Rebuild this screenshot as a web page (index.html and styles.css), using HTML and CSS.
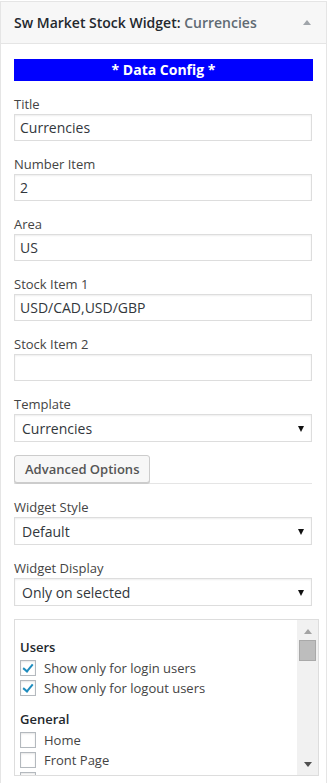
FILE: index.html
```html
<!DOCTYPE html>
<html lang="en">
<head>
  <meta charset="UTF-8" />
  <meta name="viewport" content="width=device-width, initial-scale=1" />
  <title>Sw Market Stock Widget</title>
  <link rel="stylesheet" href="styles.css">
</head>
<body>
  <div class="widget">
    <div class="widget-top">
      <h3>Sw Market Stock Widget:<span class="in-title"> Currencies</span></h3>
      <span class="toggle"></span>
    </div>

    <div class="widget-inside">
      <div class="data-config">* Data Config *</div>

      <p class="field">
        <label for="title">Title</label>
        <input id="title" type="text" value="Currencies" />
      </p>
      <p class="field">
        <label for="number">Number Item</label>
        <input id="number" type="text" value="2" />
      </p>
      <p class="field">
        <label for="area">Area</label>
        <input id="area" type="text" value="US" />
      </p>
      <p class="field">
        <label for="stock1">Stock Item 1</label>
        <input id="stock1" type="text" value="USD/CAD,USD/GBP" />
      </p>
      <p class="field">
        <label for="stock2">Stock Item 2</label>
        <input id="stock2" type="text" value="" />
      </p>
      <p class="field">
        <label for="template">Template</label>
        <span class="select">
          <select id="template">
            <option>Currencies</option>
          </select>
        </span>
      </p>

      <div class="advanced">
        <button type="button" class="button">Advanced Options</button>
      </div>

      <p class="field">
        <label for="wstyle">Widget Style</label>
        <span class="select">
          <select id="wstyle">
            <option>Default</option>
          </select>
        </span>
      </p>
      <p class="field">
        <label for="wdisplay">Widget Display</label>
        <span class="select">
          <select id="wdisplay">
            <option>Only on selected</option>
          </select>
        </span>
      </p>

      <div class="display-box">
        <div class="display-list">
          <h4>Users</h4>
          <label class="check"><input type="checkbox" checked /> Show only for login users</label>
          <label class="check"><input type="checkbox" checked /> Show only for logout users</label>

          <h4>General</h4>
          <label class="check"><input type="checkbox" /> Home</label>
          <label class="check"><input type="checkbox" /> Front Page</label>
          <label class="check"><input type="checkbox" /> Archive</label>
          <label class="check"><input type="checkbox" /> Search</label>
        </div>
        <div class="scrollbar">
          <svg class="arrow" width="8" height="5" viewBox="0 0 8 5"><path d="M0 5 L4 0 L8 5 Z" fill="#a3a3a3"/></svg>
          <div class="thumb"></div>
          <svg class="arrow down" width="8" height="5" viewBox="0 0 8 5"><path d="M0 0 L8 0 L4 5 Z" fill="#505050"/></svg>
        </div>
      </div>
    </div>
  </div>
</body>
</html>
```

FILE: styles.css
```css
body { margin: 0; padding-top: 1px; background: #fff; font-family: "Open Sans", "Liberation Sans", sans-serif; font-size: 13px; color: #444; }

.widget { width: 327px; box-sizing: border-box; border: 1px solid #e5e5e5; background: #fff; height: 800px; }
.widget-top { display: flex; align-items: center; justify-content: space-between; height: 41px; padding: 0 13px; background: #f7f7f7; border-bottom: 1px solid #e5e5e5; }
.widget-top h3 { margin: 0; font-size: 14px; font-weight: 600; color: #23282d; }
.in-title { color: #606a73; }
.toggle { width: 0; height: 0; margin-right: 2px; border-left: 4px solid transparent; border-right: 4px solid transparent; border-bottom: 5px solid #a0a5aa; }

.widget-inside { padding: 15px 13px 0; }
.data-config { height: 22px; line-height: 22px; background: #0000ff; color: #fff; font-weight: 700; font-size: 14px; text-align: center; }

.field { margin: 14px 0 0; }
.field label { display: block; line-height: 18px; margin-bottom: 1px; color: #444; }
.field input { display: block; width: 298px; height: 27px; box-sizing: border-box; margin: 0; padding: 0 5px; border: 1px solid #ddd; box-shadow: inset 0 1px 2px rgba(0,0,0,0.07); font-family: inherit; font-size: 14px; color: #32373c; background: #fff; }

.select { display: block; position: relative; width: 298px; }
.select::after { content: ""; position: absolute; right: 8px; top: 12px; border-left: 3px solid transparent; border-right: 3px solid transparent; border-top: 6px solid #111; pointer-events: none; }
.select select { display: block; width: 298px; height: 28px; margin: 0; padding: 0 7px; -webkit-appearance: none; appearance: none; border: 1px solid #ddd; border-radius: 0; box-shadow: inset 0 1px 2px rgba(0,0,0,0.07); background: #fff; font-family: inherit; font-size: 14px; color: #32373c; }

.advanced { margin-top: 13px; width: 298px; border-bottom: 1px solid #e5e5e5; height: 28px; }
.button { height: 28px; padding: 0 10px; border: 1px solid #ccc; border-radius: 3px; background: #f7f7f7; box-shadow: 0 1px 0 #ccc; font-family: inherit; font-size: 13px; font-weight: 600; color: #555; }

.display-box { display: flex; margin-top: 13px; width: 305px; height: 157px; box-sizing: border-box; border: 1px solid #ddd; }
.display-list { flex: 1; overflow: hidden; padding: 18px 5px 0; }
.display-list h4 { margin: 0 0 2px; font-size: 13px; font-weight: 600; line-height: 18px; color: #23282d; }
.check + h4 { margin-top: 12px; }
.check { display: flex; align-items: center; height: 20px; color: #444; }
.check input { flex: none; width: 16px; height: 16px; margin: 0 8px 0 0; -webkit-appearance: none; appearance: none; border: 1px solid #b4b9be; background: #fff; box-shadow: inset 0 1px 2px rgba(0,0,0,0.1); position: relative; }
.check input:checked::before { content: ""; position: absolute; left: 4px; top: 1px; width: 4px; height: 8px; border-right: 2px solid #1e8cbe; border-bottom: 2px solid #1e8cbe; transform: rotate(40deg); }

.scrollbar { width: 21px; background: #f1f1f1; display: flex; flex-direction: column; align-items: center; padding: 9px 0 8px; box-sizing: border-box; }
.scrollbar .thumb { width: 17px; height: 21px; margin-top: 6px; box-sizing: border-box; background: #bdbdbd; border: 1px solid #a9a9a9; }
.scrollbar .down { margin-top: auto; }
```
